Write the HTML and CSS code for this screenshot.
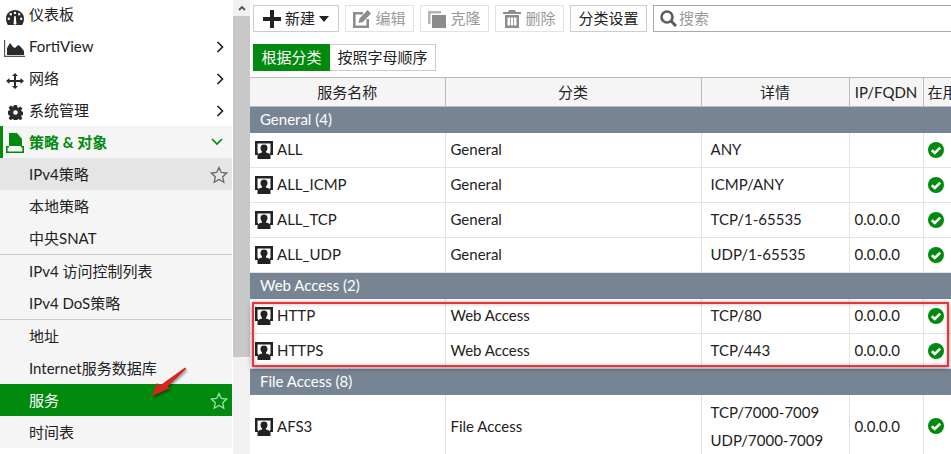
FILE: index.html
```html
<!DOCTYPE html>
<html lang="zh-CN">
  <head>
    <meta charset="UTF-8" />
    <title>服务</title>
    <link rel="stylesheet" href="styles.css">
  </head>
  <body>
    <svg class="defs" width="0" height="0">
      <symbol id="service" viewBox="0 0 18 18">
        <path fill="#222" d="M0 0h18v14h-3v-2H15.500V2.500h-13V12H3v2H0z"/>
        <path fill="#222" d="M9 3.500c2.300 0 3.500 1.500 3.500 3.400 0 1.400-.6 2.600-1.500 3.300v1.300c2.200.6 4.500 1.300 4.500 3.200V18h-13v-3.300c0-1.900 2.300-2.600 4.500-3.200v-1.300C6.100 9.500 5.500 8.300 5.500 6.900 5.500 5 6.700 3.500 9 3.500z"/>
      </symbol>
      <symbol id="check" viewBox="0 0 16 16">
        <circle cx="8" cy="8" r="8" fill="#008a0e"/>
        <path fill="none" stroke="#fff" stroke-width="2.600" d="M3.800 8.200l3 2.800 5.400-5.400"/>
      </symbol>
      <symbol id="star" viewBox="0 0 18 18">
        <path fill="none" stroke="currentColor" stroke-width="1.300" d="M9 1.500l2.300 5 5.400.6-4 3.700 1.100 5.400L9 13.500l-4.800 2.700 1.100-5.400-4-3.700 5.400-.6z"/>
      </symbol>
      <symbol id="chev" viewBox="0 0 8 12">
        <path fill="none" stroke="#222" stroke-width="1.700" d="M1.500 1l5 5-5 5"/>
      </symbol>
    </svg>

    <div class="app">
      <nav class="sidebar">
        <a class="item">
          <svg class="ico gauge" viewBox="0 0 18 16"><path fill="#2b2b2b" fill-rule="evenodd" d="M9 0c5 0 9 3.600 9 8.500 0 2.500-.7 4.700-1.800 6.500H1.800C.7 13.200 0 11 0 8.500 0 3.600 4 0 9 0zM4.800 3a1.200 1.200 0 1 0 0 2.400 1.200 1.200 0 0 0 0-2.400zM9 1.800a1.200 1.200 0 1 0 0 2.400 1.200 1.200 0 0 0 0-2.400zM13.200 3a1.200 1.200 0 1 0 0 2.400 1.200 1.200 0 0 0 0-2.400zM2.800 7.500a1.200 1.200 0 1 0 0 2.400 1.200 1.200 0 0 0 0-2.400zm12.400 0a1.200 1.200 0 1 0 0 2.400 1.200 1.200 0 0 0 0-2.400zM8.300 6l-.6 6.500a1.500 1.500 0 1 0 2.600 0L9.700 6z"/></svg>
          <span>仪表板</span>
        </a>
        <a class="item">
          <svg class="ico area" viewBox="0 0 21 17"><path fill="#2b2b2b" d="M3 15V8l3-5 3 4 2 1 3-3 2 1 4 5v4z"/><path fill="none" stroke="#555" stroke-width="1.200" d="M.6 0v16.400H21"/></svg>
          <span>FortiView</span>
          <svg class="chev"><use href="#chev"/></svg>
        </a>
        <a class="item">
          <svg class="ico move" viewBox="0 0 18 16" preserveAspectRatio="none"><path fill="#2b2b2b" d="M9 0l3 3h-2v4h4.500V5L18 8l-3.500 3V9H10v4h2l-3 3-3-3h2V9H3.500v2L0 8l3.500-3v2H8V3H6z"/></svg>
          <span>网络</span>
          <svg class="chev"><use href="#chev"/></svg>
        </a>
        <a class="item">
          <svg class="ico cog" viewBox="0 0 18 18"><path fill="#2b2b2b" fill-rule="evenodd" d="M7.200 0h3.600l.4 2.600 1.500.6 2.100-1.500 2.500 2.500-1.500 2.100.6 1.500 2.600.4v3.600l-2.600.4-.6 1.500 1.500 2.100-2.500 2.500-2.100-1.500-1.500.6-.4 2.600H7.200l-.4-2.600-1.500-.6-2.100 1.500-2.500-2.500 1.500-2.100-.6-1.500L-1 11V7.200l2.600-.4.600-1.500L.7 3.200l2.500-2.500 2.100 1.500 1.500-.6zM9 6.200a2.800 2.800 0 1 0 0 5.600 2.800 2.800 0 0 0 0-5.600z"/></svg>
          <span>系统管理</span>
          <svg class="chev"><use href="#chev"/></svg>
        </a>
        <div class="submenu">
          <a class="item head">
            <svg class="ico policy" viewBox="0 0 18 20"><path fill="#008a0e" d="M3 0h8l5 6v7H3z"/><path fill="none" stroke="#008a0e" stroke-width="1.600" d="M3 13.800H.8v5.400h16.400v-5.400H15"/></svg>
            <span>策略 &amp; 对象</span>
            <svg class="chev-down" viewBox="0 0 12 8"><path fill="none" stroke="#008a0e" stroke-width="1.700" d="M1 1l5 5 5-5"/></svg>
          </a>
          <a class="item sub hover"><span>IPv4策略</span><svg class="star"><use href="#star"/></svg></a>
          <a class="item sub"><span>本地策略</span></a>
          <a class="item sub rule"><span>中央SNAT</span></a>
          <a class="item sub"><span>IPv4 访问控制列表</span></a>
          <a class="item sub rule"><span>IPv4 DoS策略</span></a>
          <a class="item sub"><span>地址</span></a>
          <a class="item sub"><span>Internet服务数据库</span></a>
          <a class="item sub active"><span>服务</span><svg class="star"><use href="#star"/></svg></a>
          <a class="item sub"><span>时间表</span></a>
        </div>
      </nav>

      <div class="scrollbar">
        <div class="scroll-up"><svg width="8" height="6" viewBox="0 0 8 6"><path fill="none" stroke="#555" stroke-width="1.800" d="M1 5l3-3 3 3"/></svg></div>
        <div class="scroll-thumb"></div>
      </div>

      <main class="main">
        <div class="toolbar">
          <button class="btn new">
            <svg width="18" height="18" viewBox="0 0 18 18"><path fill="#222" d="M7 0h4v7h7v4h-7v7H7v-7H0V7h7z"/></svg>
            <span>新建</span>
            <svg width="10" height="6" viewBox="0 0 10 6"><path fill="#222" d="M0 0h10L5 6z"/></svg>
          </button>
          <button class="btn off edit">
            <svg width="18" height="18" viewBox="0 0 18 18"><path fill="none" stroke="#8c8c8c" stroke-width="2.600" d="M10 3.300H1.300v13.400h13.400V9"/><path fill="#8c8c8c" d="M14.500 0L18 3.500 10 12l-4.500 1 1-4.500z"/></svg>
            <span>编辑</span>
          </button>
          <button class="btn off clone">
            <svg width="18" height="18" viewBox="0 0 18 18"><path fill="#b5b5b5" d="M0 1h13v2.500H2.500V14H0z"/><path fill="#8c8c8c" d="M4 5h14v13H4z"/></svg>
            <span>克隆</span>
          </button>
          <button class="btn off trash">
            <svg width="18" height="18" viewBox="0 0 18 18"><path fill="#8c8c8c" fill-rule="evenodd" d="M6 0h6l1 2h5v2H0V2h5zM2 5h14v13H2zm2.500 2.500v8H7v-8zm3.300 0v8h2.400v-8zm3.200 0v8h2.500v-8z"/></svg>
            <span>删除</span>
          </button>
          <button class="btn">分类设置</button>
          <div class="search">
            <svg width="17" height="17" viewBox="0 0 17 17"><circle cx="7" cy="7" r="5.500" fill="none" stroke="#5d5d5d" stroke-width="2.600"/><path stroke="#5d5d5d" stroke-width="3" d="M11 11l5 5"/></svg>
            <span>搜索</span>
          </div>
        </div>

        <div class="toggle">
          <button class="tab on">根据分类</button>
          <button class="tab">按照字母顺序</button>
        </div>

        <table class="list">
          <colgroup>
            <col class="c-name"><col class="c-cat"><col class="c-detail"><col class="c-ip"><col class="c-use">
          </colgroup>
          <thead>
            <tr><th>服务名称</th><th>分类</th><th>详情</th><th>IP/FQDN</th><th class="use">在用</th></tr>
          </thead>
          <tbody>
            <tr class="group"><td colspan="5">General (4)</td></tr>
            <tr><td><svg class="svc"><use href="#service"/></svg>ALL</td><td>General</td><td>ANY</td><td></td><td><svg class="ok"><use href="#check"/></svg></td></tr>
            <tr><td><svg class="svc"><use href="#service"/></svg>ALL_ICMP</td><td>General</td><td>ICMP/ANY</td><td></td><td><svg class="ok"><use href="#check"/></svg></td></tr>
            <tr><td><svg class="svc"><use href="#service"/></svg>ALL_TCP</td><td>General</td><td>TCP/1-65535</td><td>0.0.0.0</td><td><svg class="ok"><use href="#check"/></svg></td></tr>
            <tr><td><svg class="svc"><use href="#service"/></svg>ALL_UDP</td><td>General</td><td>UDP/1-65535</td><td>0.0.0.0</td><td><svg class="ok"><use href="#check"/></svg></td></tr>
            <tr class="group"><td colspan="5">Web Access (2)</td></tr>
            <tr><td><svg class="svc"><use href="#service"/></svg>HTTP</td><td>Web Access</td><td>TCP/80</td><td>0.0.0.0</td><td><svg class="ok"><use href="#check"/></svg></td></tr>
            <tr><td><svg class="svc"><use href="#service"/></svg>HTTPS</td><td>Web Access</td><td>TCP/443</td><td>0.0.0.0</td><td><svg class="ok"><use href="#check"/></svg></td></tr>
            <tr class="group"><td colspan="5">File Access (8)</td></tr>
            <tr class="tall"><td><svg class="svc"><use href="#service"/></svg>AFS3</td><td>File Access</td><td>TCP/7000-7009<br>UDP/7000-7009</td><td>0.0.0.0</td><td><svg class="ok"><use href="#check"/></svg></td></tr>
          </tbody>
        </table>
      </main>
    </div>

    <!-- annotations drawn over the screenshot -->
    <div class="mark-box"></div>
    <svg class="mark-arrow" width="44" height="38" viewBox="0 0 44 38">
      <path fill="#d9241f" d="M35 1.500l1.200 1.500L17.500 20.500l2.500 1.500L2 30l5-13 3 2.500z"/>
    </svg>
  </body>
</html>
```
FILE: styles.css
```css
html,
body {
  margin: 0;
  height: 100%;
  overflow: hidden;
  background: #fff;
}

body {
  font-family: Lato, "Noto Sans CJK SC", sans-serif;
  font-size: 15px;
  color: #222;
}

.defs {
  position: absolute;
}

.app {
  display: flex;
  height: 454px;
}

/* sidebar */
.sidebar {
  width: 232px;
  flex: none;
  margin-top: -2px;
}

.item {
  display: flex;
  align-items: center;
  height: 32px;
  padding: 0 0 1px 29px;
  position: relative;
  box-sizing: border-box;
}

.ico {
  position: absolute;
  left: 6px;
  width: 18px;
}

.ico.gauge {
  top: 12px;
  height: 16px;
}

.ico.area {
  left: 4px;
  top: 10px;
  width: 21px;
  height: 17px;
}

.ico.move {
  top: 11px;
  height: 16px;
}

.ico.cog {
  left: 8px;
  top: 11px;
  width: 15px;
  height: 15px;
}

.ico.policy {
  top: 7px;
  height: 20px;
}

.chev {
  position: absolute;
  left: 216px;
  top: 11px;
  width: 8px;
  height: 12px;
}

.chev-down {
  position: absolute;
  left: 211px;
  top: 12px;
  width: 12px;
  height: 8px;
}

.submenu {
  background: #f5f5f5;
}

.item.head {
  color: #008a0e;
  font-weight: bold;
  height: 32px;
  box-shadow: inset 3px 0 0 #008a0e;
}

.item.hover {
  background: #e5e5e5;
}

.item.active {
  background: #008a0e;
  color: #fff;
}

.item.rule {
  height: 33px;
  border-bottom: 1px solid #ccc;
}

.star {
  position: absolute;
  left: 210px;
  top: 8px;
  width: 18px;
  height: 18px;
  color: #666;
}

.active .star {
  color: #9fe0b0;
}

.scrollbar {
  width: 17px;
  margin-left: 1px;
  flex: none;
  background: #f1f1f1;
}

.scroll-up {
  height: 16px;
  display: flex;
  align-items: center;
  justify-content: center;
}

.scroll-thumb {
  height: 341px;
  background: #c8c8c8;
}

/* toolbar */
.main {
  flex: 1;
  min-width: 0;
}

.toolbar {
  display: flex;
  gap: 6px;
  padding: 5px 0 0 3px;
}

.btn {
  height: 27px;
  box-sizing: border-box;
  display: flex;
  align-items: center;
  justify-content: center;
  gap: 4px;
  padding: 0 0 2px;
  background: #fff;
  border: 1px solid #ccc;
  font: inherit;
  color: #222;
}

.btn svg {
  margin-top: 2px;
}

.btn:nth-child(5) {
  width: 77px;
}

.btn.new {
  width: 86px;
}

.btn.off {
  width: 69px;
  color: #999;
  border-color: #e3e3e3;
}

.search {
  flex: 1;
  height: 27px;
  box-sizing: border-box;
  margin-right: -10px;
  border: 1px solid #aaa;
  display: flex;
  align-items: center;
  gap: 2px;
  padding: 0 0 2px 6px;
  color: #999;
}

.search svg {
  margin-top: 2px;
}

.toggle {
  display: flex;
  padding: 12px 0 6px 3px;
}

.tab {
  height: 27px;
  width: 106px;
  box-sizing: border-box;
  padding: 0 0 2px;
  background: #fff;
  border: 1px solid #ccc;
  border-left: 0;
  font: inherit;
  color: #222;
}

.tab.on {
  width: 77px;
  background: #008a0e;
  border: 1px solid #008a0e;
  color: #fff;
}

/* table */
.list {
  table-layout: fixed;
  border-collapse: collapse;
  width: 701px;
}

.c-name { width: 195px; }
.c-cat { width: 256px; }
.c-detail { width: 148px; }
.c-ip { width: 74px; }
.c-use { width: 28px; }

.list th {
  height: 27px;
  padding: 0 0 1px;
  background: #f5f5f5;
  font-weight: normal;
  text-align: center;
  border: 1px solid #bbb;
  border-left: 0;
  white-space: nowrap;
  overflow: hidden;
}

.list th.use {
  text-align: left;
  padding-left: 4px;
  border-right: 0;
}

.list td {
  height: 32px;
  padding: 0 0 2px 5px;
  border: 1px solid #e3e3e3;
  border-top: 0;
  border-left: 0;
  white-space: nowrap;
  overflow: hidden;
}

.list td:nth-child(3) {
  padding-left: 9px;
}

.list td:nth-child(5) {
  padding: 0 0 0 4px;
}

.list td:last-child {
  border-right: 0;
}

.list tr.group td {
  height: 24px;
  padding: 0 0 2px 10px;
  background: #778494;
  color: #fff;
  border: 0;
}

.list .tall td {
  line-height: 28px;
  padding-top: 3px;
  padding-bottom: 3px;
}

.svc {
  width: 18px;
  height: 18px;
  margin-right: 4px;
  vertical-align: -4px;
}

.list td:first-child {
  padding: 0 0 1px 5px;
}

.list tr.group td:first-child {
  padding-left: 10px;
}

.ok {
  width: 16px;
  height: 16px;
  vertical-align: -2px;
}

.mark-box {
  position: absolute;
  left: 252px;
  top: 302px;
  width: 693px;
  height: 61px;
  border: 2px solid #ee3338;
  box-shadow: 0 1px 5px rgba(0, 0, 0, 0.45), inset 0 0 4px rgba(0, 0, 0, 0.25);
}

.mark-arrow {
  position: absolute;
  left: 150px;
  top: 366px;
  filter: drop-shadow(1px 2px 1px rgba(0, 0, 0, 0.4));
}
```
